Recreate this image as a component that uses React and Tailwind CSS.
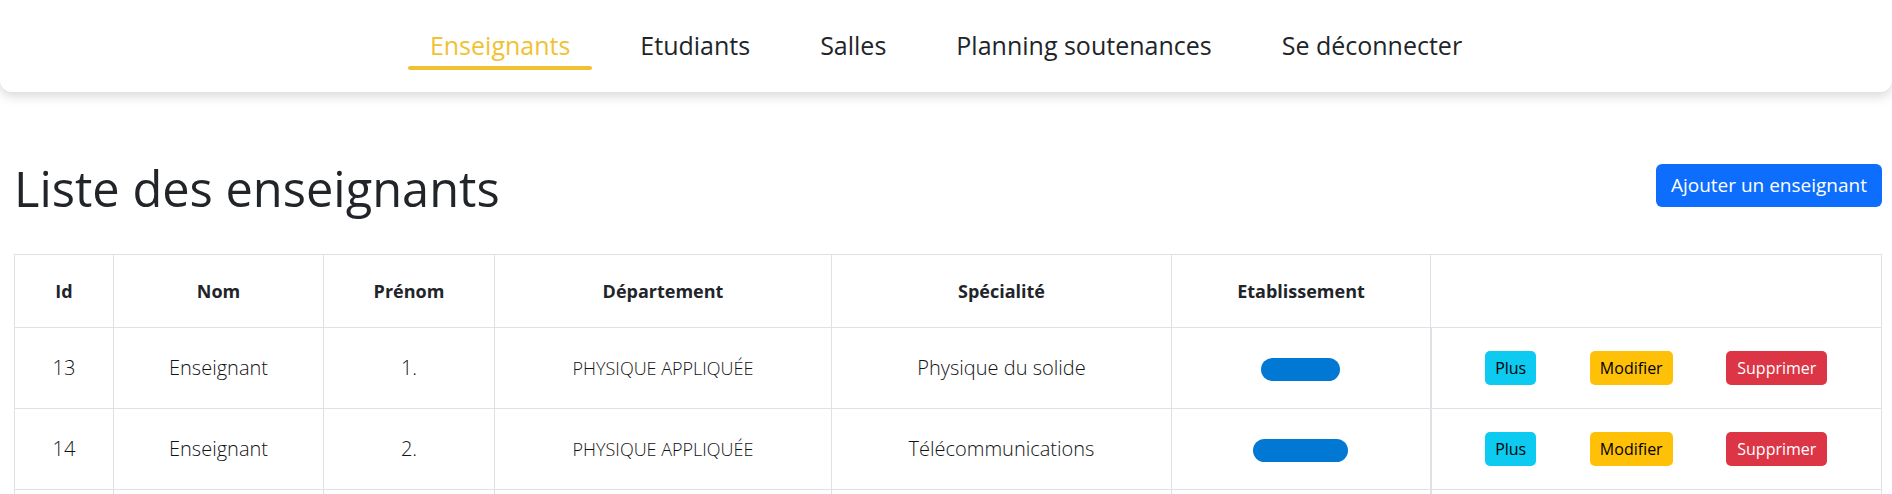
const navItems = [
  { label: "Enseignants", active: true },
  { label: "Etudiants" },
  { label: "Salles" },
  { label: "Planning soutenances" },
  { label: "Se déconnecter" },
]

const teachers = [
  { id: 13, nom: "Enseignant", prenom: "1.", dep: "PHYSIQUE APPLIQUÉE", spec: "Physique du solide", pill: "w-[79px]" },
  { id: 14, nom: "Enseignant", prenom: "2.", dep: "PHYSIQUE APPLIQUÉE", spec: "Télécommunications", pill: "w-[95px]" },
  { id: 15, nom: "Enseignant", prenom: "3.", dep: "PHYSIQUE APPLIQUÉE", spec: "Physique du solide", pill: "w-[86px]" },
]

const NavBar = () => {
  return (
    <nav className="w-full h-[92px] bg-white rounded-b-xl shadow-[0_4px_12px_rgba(0,0,0,0.16)] flex justify-center gap-[26px]">
      {navItems.map((item) => (
        <a
          key={item.label}
          href="#"
          className={`pt-[28px] flex flex-col text-[25px] font-medium leading-[34px] ${
            item.active ? "text-[#f0c233]" : "text-[#212529]"
          }`}
        >
          <span className="px-[22px] whitespace-nowrap">{item.label}</span>
          <span
            className={`mt-[4px] h-[4px] rounded-full ${
              item.active ? "bg-[#f0c233]" : "bg-transparent"
            }`}
          />
        </a>
      ))}
    </nav>
  )
}

const TeacherRow = ({ teacher }) => {
  return (
    <tr className="h-[81px]">
      <td className="border border-[#dee2e6] text-center">{teacher.id}</td>
      <td className="border border-[#dee2e6] text-center">{teacher.nom}</td>
      <td className="border border-[#dee2e6] text-center">{teacher.prenom}</td>
      <td className="border border-[#dee2e6] text-center text-[18px]">{teacher.dep}</td>
      <td className="border border-[#dee2e6] text-center">{teacher.spec}</td>
      <td className="border border-[#dee2e6] text-center">
        <span className={`inline-block align-middle h-[23px] rounded-full bg-[#0078d4] ${teacher.pill}`} />
      </td>
      <td className="border border-[#dee2e6] border-l-2">
        <div className="flex justify-evenly items-center">
          <button className="h-[34px] px-[10px] rounded-[5px] bg-[#0dcaf0] text-black text-[16px] font-normal">
            Plus
          </button>
          <button className="h-[34px] px-[10px] rounded-[5px] bg-[#ffc107] text-black text-[16px] font-normal">
            Modifier
          </button>
          <button className="h-[34px] px-[11px] rounded-[5px] bg-[#dc3545] text-white text-[16px] font-normal">
            Supprimer
          </button>
        </div>
      </td>
    </tr>
  )
}

export default function App() {
  return (
    <div className="bg-white text-[#212529] font-['Open_Sans',sans-serif]">
      <NavBar />
      <main className="pl-[14px] pr-[10px] pt-[67px]">
        <div className="flex justify-between items-start">
          <h1 className="text-[48.75px] leading-[58px] font-normal">Liste des enseignants</h1>
          <button className="mt-[5px] h-[43px] px-[15px] rounded-[6px] bg-[#0d6efd] text-white text-[19px]">
            Ajouter un enseignant
          </button>
        </div>
        <table className="mt-[37px] w-full table-fixed border-collapse text-[20px] font-light text-[#111315]">
          <thead>
            <tr className="h-[73px] text-[18px] font-bold text-[#212529]">
              <th className="w-[99px] border border-[#dee2e6]">Id</th>
              <th className="w-[210px] border border-[#dee2e6]">Nom</th>
              <th className="w-[171px] border border-[#dee2e6]">Prénom</th>
              <th className="w-[337px] border border-[#dee2e6]">Département</th>
              <th className="w-[340px] border border-[#dee2e6]">Spécialité</th>
              <th className="w-[259px] border border-[#dee2e6]">Etablissement</th>
              <th className="border border-[#dee2e6]"></th>
            </tr>
          </thead>
          <tbody>
            {teachers.map((t) => (
              <TeacherRow key={t.id} teacher={t} />
            ))}
          </tbody>
        </table>
      </main>
    </div>
  )
}
